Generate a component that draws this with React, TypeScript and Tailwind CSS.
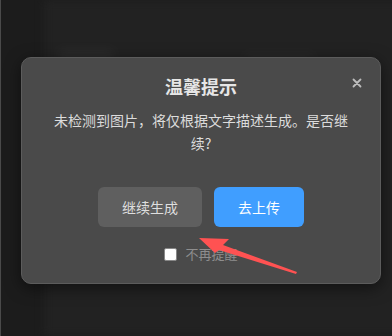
import React from "react";

export default function App() {
  return (
    <div
      className="relative w-[392px] h-[336px] overflow-hidden bg-[#1c1c1c] flex"
      style={{ fontFamily: '"Noto Sans CJK SC", "Noto Sans", sans-serif' }}
    >
      {/* left edge strip */}
      <div className="w-[1px] h-full bg-[#4a4a4a]" />
      {/* background blurred page */}
      <div className="absolute left-[44px] top-0 right-[-10px] bottom-0 bg-[#222222] blur-[4px]">
        <div className="ml-[14px] mt-[50px] w-[56px] h-[10px] rounded bg-[#2c2c2c] blur-[3px]" />
        <div className="ml-[200px] -mt-[6px] w-[70px] h-[10px] rounded bg-[#292929] blur-[3px]" />
      </div>

      {/* modal */}
      <div className="absolute left-[21px] top-[57px] w-[360px] h-[227px] rounded-[10px] bg-[#4a4a4a] border border-[#5c5c5c] shadow-[0_4px_16px_rgba(0,0,0,0.5)] flex flex-col items-center pt-[15px]">
        <div className="text-[18px] leading-[26px] font-bold text-[#e6e6e6]">温馨提示</div>
        <button className="absolute right-[17px] top-[19px] w-[12px] h-[12px] flex items-center justify-center">
          <svg width="10" height="10" viewBox="0 0 10 10">
            <path d="M1.5 1.5 L8.5 8.5 M8.5 1.5 L1.5 8.5" stroke="#bdbdbd" strokeWidth="1.8" strokeLinecap="round" />
          </svg>
        </button>
        <div className="mt-[10px] w-[300px] text-center text-[14px] leading-[23px] text-[#dcdcdc]">
          未检测到图片，将仅根据文字描述生成。是否继续?
        </div>
        <div className="mt-[32px] flex gap-[12px]">
          <div className="w-[104px] h-[40px] rounded-[6px] bg-[#5f5f5f] flex items-center justify-center text-[14px] text-[#dedede]">
            继续生成
          </div>
          <div className="w-[90px] h-[40px] rounded-[6px] bg-[#409eff] flex items-center justify-center text-[14px] text-white">
            去上传
          </div>
        </div>
        <div className="mt-[17px] flex items-center gap-[8px] h-[20px]">
          <div className="w-[13px] h-[13px] rounded-[2px] bg-white border border-[#888]" />
          <span className="text-[13px] leading-[20px] text-[#8e8e8e]">不再提醒</span>
        </div>
      </div>

      {/* red arrow annotation */}
      <svg className="absolute left-0 top-0" width="392" height="336" viewBox="0 0 392 336">
        <polygon
          points="199,238 229,239 223,245 297,272 296,274 219,250 215,253"
          fill="#ff5252"
        />
      </svg>
    </div>
  );
}
